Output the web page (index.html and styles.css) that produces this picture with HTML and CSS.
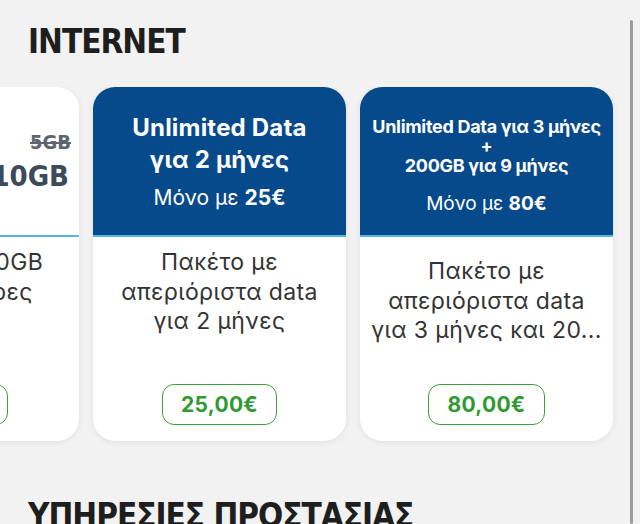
FILE: index.html
```html
<!DOCTYPE html>
<html lang="el">
<head>
    <meta charset="UTF-8">
    <meta name="viewport" content="width=device-width, initial-scale=1.0">
    <title>Πακέτα Internet</title>
    <link rel="stylesheet" href="styles.css">
</head>
<body>
    <div class="page">
        <h2 class="section-title">INTERNET</h2>

        <div class="slider">
            <div class="track">
                <div class="card">
                    <div class="card-head card-head--light">
                        <div class="gb-swap">
                            <span class="gb-old">5GB</span>
                            <span class="gb-new">10GB</span>
                        </div>
                    </div>
                    <div class="card-body">
                        <p class="card-desc">Πακέτο με 10GB<br>για 30 ημέρες</p>
                        <span class="price">10,00€</span>
                    </div>
                </div>

                <div class="card">
                    <div class="card-head">
                        <div class="offer-title">Unlimited Data<br>για 2 μήνες</div>
                        <div class="offer-price">Μόνο με <b>25€</b></div>
                    </div>
                    <div class="card-body">
                        <p class="card-desc">Πακέτο με<br>απεριόριστα data<br>για 2 μήνες</p>
                        <span class="price">25,00€</span>
                    </div>
                </div>

                <div class="card">
                    <div class="card-head card-head--combo">
                        <div class="offer-title offer-title--small">Unlimited Data για 3 μήνες<br>+<br>200GB για 9 μήνες</div>
                        <div class="offer-price offer-price--small">Μόνο με <b>80€</b></div>
                    </div>
                    <div class="card-body">
                        <p class="card-desc card-desc--low" title="Πακέτο με απεριόριστα data για 3 μήνες και 200GB για 9 μήνες">Πακέτο με<br>απεριόριστα data<br>για 3 μήνες και 20...</p>
                        <span class="price">80,00€</span>
                    </div>
                </div>
            </div>
        </div>

        <h2 class="section-title section-title--next">ΥΠΗΡΕΣΙΕΣ ΠΡΟΣΤΑΣΙΑΣ</h2>
    </div>
    <div class="scroll-thumb"></div>
</body>
</html>
```

FILE: styles.css
```css
body, html {
    margin: 0;
    height: 100%;
    background-color: #f2f2f2;
    font-family: Inter, "Noto Sans", sans-serif;
    overflow: hidden;
}
.page {
    padding-top: 22px;
}
.section-title {
    margin: 0 0 0 28px;
    font-family: "DejaVu Sans Condensed", "DejaVu Sans", sans-serif;
    font-weight: bold;
    font-size: 33px;
    line-height: 40px;
    color: #1e1e1e;
    letter-spacing: -1px;
}
.section-title--next {
    margin-top: 45px;
}
/* horizontal carousel, first card scrolled partly out of view */
.slider {
    margin-top: 25px;
    overflow: hidden;
}
.track {
    display: flex;
    gap: 14px;
    margin-left: -174px;
    padding-bottom: 10px;
}
.card {
    flex: 0 0 253px;
    height: 354px;
    display: flex;
    flex-direction: column;
    background-color: #fff;
    border-radius: 22px;
    overflow: hidden;
    box-shadow: 0 1px 6px rgba(0, 0, 0, 0.08);
}
.card-head {
    height: 150px;
    box-sizing: border-box;
    border-bottom: 2px solid #52b7e4;
    background-color: #074a8b;
    color: #fff;
    display: flex;
    flex-direction: column;
    align-items: center;
    justify-content: center;
    text-align: center;
}
.card-head--light {
    background-color: #fff;
    align-items: flex-end;
}
.card-head--combo {
    padding-top: 10px;
}
.gb-swap {
    display: flex;
    flex-direction: column;
    align-items: flex-end;
    padding-right: 10px;
    font-family: "DejaVu Sans Condensed", "DejaVu Sans", sans-serif;
    font-weight: bold;
    color: #3d4a5a;
}
.gb-old {
    font-size: 20px;
    color: #5c6570;
    text-decoration: line-through;
    margin-right: -2px;
}
.gb-new {
    font-size: 29px;
    margin-top: 5px;
}
.offer-title {
    font-weight: bold;
    font-size: 24px;
    line-height: 32px;
    letter-spacing: 0.2px;
}
.offer-title--small {
    font-size: 18px;
    line-height: 19.5px;
    letter-spacing: -0.3px;
}
.offer-price {
    margin-top: 9px;
    font-size: 21px;
}
.offer-price--small {
    margin-top: 17px;
    font-size: 19px;
}
.card-body {
    flex: 1;
    display: flex;
    flex-direction: column;
    align-items: center;
    padding: 11px 10px 16px;
}
.card-desc {
    margin: 0;
    font-size: 23px;
    line-height: 29.5px;
    letter-spacing: 0.4px;
    color: #333;
    text-align: center;
    white-space: nowrap;
}
.card-desc--low {
    margin-top: 9px;
}
.price {
    margin-top: auto;
    padding: 7px 18px;
    border: 1.5px solid #3e9e3e;
    border-radius: 12px;
    font-size: 21px;
    font-weight: bold;
    letter-spacing: 0.3px;
    color: #2f9a2f;
}
.scroll-thumb {
    position: fixed;
    top: 20px;
    bottom: 0;
    right: 7px;
    width: 3px;
    border-radius: 2px;
    background-color: #9c9c9c;
}
```
